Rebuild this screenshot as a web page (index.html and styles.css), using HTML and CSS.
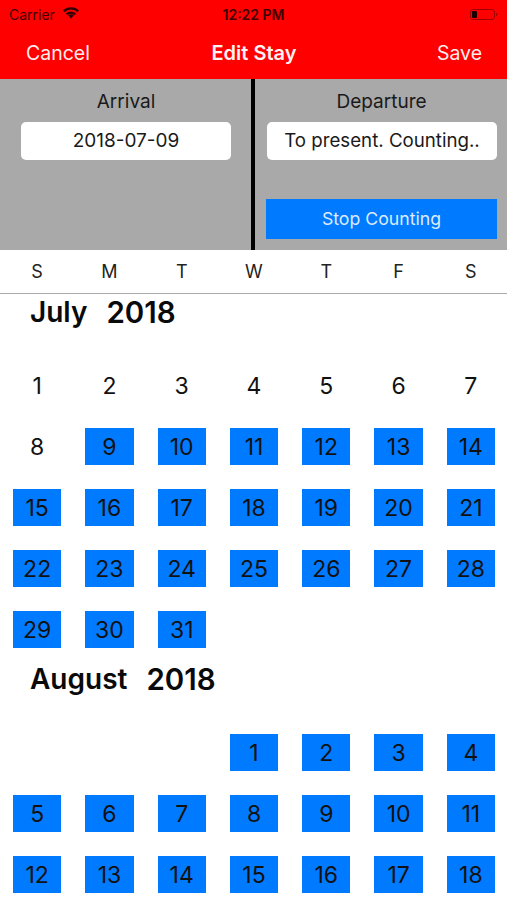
FILE: index.html
```html
<!DOCTYPE html>
<html lang="en">
<head>
<meta charset="utf-8">
<title>Edit Stay</title>
<link rel="stylesheet" href="styles.css">
</head>
<body>
<div class="phone">
  <header class="top">
    <div class="status">
      <div class="status-left">
        <span>Carrier</span>
        <svg class="wifi" viewBox="0 0 18 13" width="18" height="13"><path d="M9 12.6 6.2 9.5a4 4 0 0 1 5.6 0z"/><path d="M1 4.5a11.4 11.4 0 0 1 16 0l-1.6 1.7a9 9 0 0 0-12.8 0z"/><path d="M3.9 7.6a7.2 7.2 0 0 1 10.2 0l-1.5 1.6a5 5 0 0 0-7.2 0z"/></svg>
      </div>
      <span class="clock">12:22 PM</span>
      <svg class="battery" viewBox="0 0 29 13" width="29" height="13"><rect x="0.5" y="1.5" width="24" height="10" rx="2.5" fill="none" stroke="#a00000"/><rect x="2" y="3" width="5" height="7" rx="1" fill="#1c0000"/><path d="M26 4.5v4l1.6-2z" fill="#a00000"/></svg>
    </div>
    <nav class="nav">
      <span>Cancel</span>
      <strong>Edit Stay</strong>
      <span class="nav-end">Save</span>
    </nav>
  </header>
  <section class="panel">
    <div class="side side-left">
      <div class="label">Arrival</div>
      <div class="field">2018-07-09</div>
    </div>
    <div class="side side-right">
      <div class="label">Departure</div>
      <div class="field field-right">To present. Counting..</div>
      <div class="stop">Stop Counting</div>
    </div>
  </section>
  <div class="week">
    <span>S</span><span>M</span><span>T</span><span>W</span><span>T</span><span>F</span><span>S</span>
  </div>
  <main class="calendar">
    <h2 class="month month-first"><span>July</span><span class="year">2018</span></h2>
    <div class="grid">
      <div class="day">1</div><div class="day">2</div><div class="day">3</div><div class="day">4</div><div class="day">5</div><div class="day">6</div><div class="day">7</div>
      <div class="day">8</div><div class="day on">9</div><div class="day on">10</div><div class="day on">11</div><div class="day on">12</div><div class="day on">13</div><div class="day on">14</div>
      <div class="day on">15</div><div class="day on">16</div><div class="day on">17</div><div class="day on">18</div><div class="day on">19</div><div class="day on">20</div><div class="day on">21</div>
      <div class="day on">22</div><div class="day on">23</div><div class="day on">24</div><div class="day on">25</div><div class="day on">26</div><div class="day on">27</div><div class="day on">28</div>
      <div class="day on">29</div><div class="day on">30</div><div class="day on">31</div>
    </div>
    <h2 class="month"><span>August</span><span class="year">2018</span></h2>
    <div class="grid">
      <div class="day"></div><div class="day"></div><div class="day"></div><div class="day on">1</div><div class="day on">2</div><div class="day on">3</div><div class="day on">4</div>
      <div class="day on">5</div><div class="day on">6</div><div class="day on">7</div><div class="day on">8</div><div class="day on">9</div><div class="day on">10</div><div class="day on">11</div>
      <div class="day on">12</div><div class="day on">13</div><div class="day on">14</div><div class="day on">15</div><div class="day on">16</div><div class="day on">17</div><div class="day on">18</div>
    </div>
  </main>
</div>
</body>
</html>
```
FILE: styles.css
```css
* { box-sizing: border-box; }
html, body { margin: 0; padding: 0; }
body { background: #fff; font-family: Inter, "Liberation Sans", Arial, sans-serif; color: #111; }
.phone { width: 507px; height: 900px; overflow: hidden; }
.top { height: 79px; background: #ff0000; }
.status { height: 28px; padding: 0 8px 0 9px; display: flex; align-items: center; justify-content: space-between; position: relative; font-size: 14px; color: #400000; }
.status-left { display: flex; align-items: center; gap: 7px; }
.wifi { fill: #300000; margin-top: -3px; }
.clock { position: absolute; left: 0; right: 0; text-align: center; font-weight: 600; font-size: 14px; }
.nav { height: 51px; padding: 0 25px 2px 26px; display: grid; grid-template-columns: 1fr auto 1fr; align-items: center; color: #ffecec; font-size: 19.5px; }
.nav strong { color: #fff2f2; font-weight: 600; font-size: 20px; }
.nav-end { text-align: right; }
.panel { height: 171px; background: #a9a9a9; display: flex; }
.side { display: flex; flex-direction: column; }
.side-left { width: 251px; padding: 11px 20px 0 21px; }
.side-right { width: 256px; border-left: 4px solid #000; padding: 11px 10px 0 11px; }
.label { text-align: center; font-size: 19px; line-height: 24px; color: #1a1a1a; }
.field { height: 38px; margin-top: 8px; background: #fff; border-radius: 5px; text-align: center; font-size: 19px; line-height: 38px; color: #1a1a1a; white-space: nowrap; }
.field-right { margin-left: 1px; font-size: 18.7px; }
.stop { height: 40px; margin-top: 39px; background: #007aff; color: #dcebff; text-align: center; font-size: 17.7px; line-height: 40px; }
.week { height: 44px; border-bottom: 1px solid #aaa; display: grid; grid-template-columns: repeat(7, 1fr); padding: 0 0 0 1px; align-items: center; font-size: 18px; text-align: center; color: #222; }
.calendar { padding: 0 0 0 1px; }
.month { margin: 0; padding-left: 29px; height: 38px; font-size: 28px; line-height: 38px; font-weight: 600; color: #0a0a0a; display: flex; gap: 19px; }
.year { font-size: 29.5px; }
.month-first { height: 37px; line-height: 36px; }
.grid { display: grid; grid-template-columns: repeat(7, 1fr); grid-auto-rows: 61px; margin-top: 24px; }
.day { display: flex; justify-content: center; align-items: center; font-size: 23px; color: #111; }
.on { background: #007aff; background-clip: content-box; padding: 12px; }
```
